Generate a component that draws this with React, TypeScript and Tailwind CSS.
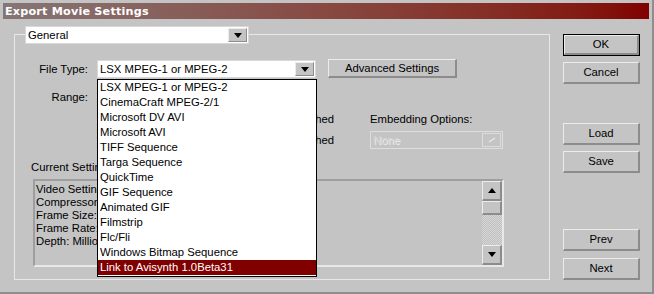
import type { ReactNode } from 'react'

const fileTypes = [
  'LSX MPEG-1 or MPEG-2',
  'CinemaCraft MPEG-2/1',
  'Microsoft DV AVI',
  'Microsoft AVI',
  'TIFF Sequence',
  'Targa Sequence',
  'QuickTime',
  'GIF Sequence',
  'Animated GIF',
  'Filmstrip',
  'Flc/Fli',
  'Windows Bitmap Sequence',
  'Link to Avisynth 1.0Beta31',
]

function Arrow({ up = false, color = '#000' }: { up?: boolean; color?: string }) {
  return (
    <svg width="8" height="5" viewBox="0 0 8 5">
      <polygon points={up ? '0,5 8,5 4,0' : '0,0 8,0 4,5'} fill={color} />
    </svg>
  )
}

function Button({ children, isDefault = false, className = '' }: { children: ReactNode; isDefault?: boolean; className?: string }) {
  const face = (
    <div className="flex-1 flex items-center justify-center border border-t-[#ececec] border-l-[#ececec] border-r-[#8c8c8c] border-b-[#8c8c8c] border-b-2 border-r-2">
      {children}
    </div>
  )
  if (isDefault) {
    return <div className={`flex border border-black ${className}`}>{face}</div>
  }
  return <div className={`flex ${className}`}>{face}</div>
}

function Dropdown({ value, className = '' }: { value: string; className?: string }) {
  return (
    <div className={`flex bg-white border border-[#d8d8d8] ${className}`}>
      <div className="flex-1 pl-[2px] leading-[16px] whitespace-nowrap overflow-hidden">{value}</div>
      <div className="w-[19px] my-[1px] mr-[1px] bg-[#c4c4c4] flex items-center justify-center border border-t-[#ececec] border-l-[#ececec] border-r-[#8c8c8c] border-b-[#8c8c8c]">
        <Arrow />
      </div>
    </div>
  )
}

// text whose left part lies under the open list: only the right end shows
function TailText({ children }: { children: ReactNode }) {
  return (
    <div className="w-[17px] h-[15px] overflow-hidden flex justify-end">
      <span className="shrink-0 whitespace-nowrap">{children}</span>
    </div>
  )
}

export default function App() {
  return (
    <div className="relative w-[654px] h-[294px] overflow-hidden bg-[#c4c4c4] border-r-2 border-b-2 border-[#8e8e8e] text-[11.3px] leading-[15px] text-black font-['Liberation_Sans',Arial,sans-serif]">
      {/* title bar */}
      <div className="mx-[3px] mt-[3px] h-[16px] bg-linear-to-r from-[#857676] to-[#800000] flex items-center pl-[2px]">
        <span className="text-white font-bold text-[11.2px] tracking-[0.2px] font-['DejaVu_Sans',Verdana,sans-serif]">
          Export Movie Settings
        </span>
      </div>

      <div className="flex pt-[15px]">
        {/* left: General group */}
        <div className="pl-[14px]">
          <div className="w-[536px] h-[246px] border border-[#e8e8e8] flex flex-col">
            <Dropdown value="General" className="ml-[10px] -mt-[9px] w-[224px] h-[18px]" />

            <div className="mt-[16px] flex items-start h-[18px]">
              <div className="w-[73px] text-right leading-[18px]">File Type:</div>
              <Dropdown value="LSX MPEG-1 or MPEG-2" className="ml-[9px] w-[219px] h-[18px]" />
              <Button className="ml-[12px] -mt-[1px] w-[129px] h-[19px]">Advanced Settings</Button>
            </div>

            <div className="mt-[12px] flex h-[15px]">
              <div className="w-[73px] text-right">Range:</div>
            </div>

            <div className="mt-[7px] flex">
              <div className="ml-[302px] flex flex-col">
                <TailText>Open When Finished</TailText>
                <div className="mt-[6px]">
                  <TailText>Beep When Finished</TailText>
                </div>
              </div>
              <div className="ml-[36px] flex flex-col">
                <div className="h-[15px]">Embedding Options:</div>
                <div className="mt-[4px] w-[133px] h-[18px] flex border border-[#dedede]">
                  <div className="flex-1 pl-[2px] leading-[16px] text-[#d2d2d2] [text-shadow:1px_1px_0_#ececec]">None</div>
                  <div className="w-[19px] my-[1px] mr-[1px] flex items-center justify-center border border-[#dcdcdc]">
                    <svg width="8" height="6" viewBox="0 0 8 6">
                      <path d="M1 5 L7 1" stroke="#ececec" strokeWidth="1.2" />
                    </svg>
                  </div>
                </div>
              </div>
            </div>

            <div className="mt-[11px] ml-[16px] w-[66px] h-[15px] overflow-hidden whitespace-nowrap">Current Settings:</div>

            <div className="mt-[4px] ml-[18px] w-[471px] h-[88px] flex border-2 border-t-[#9e9e9e] border-l-[#9e9e9e] border-r-[#e8e8e8] border-b-[#e8e8e8]">
              <div className="flex-1">
                <div className="w-[62px] pl-[1px] pt-[2px] leading-[13px] whitespace-nowrap overflow-hidden">
                  <div>Video Settings</div>
                  <div>Compressor: LSX MPEG</div>
                  <div>Frame Size: 720 x 480</div>
                  <div>Frame Rate: 29.97</div>
                  <div>Depth: Millions</div>
                </div>
              </div>
              <div className="w-[20px] flex flex-col">
                <div className="h-[20px] flex items-center justify-center border border-t-[#ececec] border-l-[#ececec] border-r-[#8c8c8c] border-b-[#8c8c8c] border-b-2 border-r-2">
                  <Arrow up />
                </div>
                <div className="h-[14px] border border-t-[#ececec] border-l-[#ececec] border-r-[#8c8c8c] border-b-[#8c8c8c] border-b-2 border-r-2" />
                <div className="flex-1 bg-[repeating-conic-gradient(#d6d6d6_0_25%,#c0c0c0_0_50%)] bg-[length:2px_2px]" />
                <div className="h-[20px] flex items-center justify-center border border-t-[#ececec] border-l-[#ececec] border-r-[#8c8c8c] border-b-[#8c8c8c] border-b-2 border-r-2">
                  <Arrow />
                </div>
              </div>
            </div>
          </div>
        </div>

        {/* right: buttons */}
        <div className="ml-[13px] w-[77px] flex flex-col">
          <Button isDefault className="h-[22px]">OK</Button>
          <Button className="mt-[6px] h-[22px]">Cancel</Button>
          <Button className="mt-[39px] h-[22px]">Load</Button>
          <Button className="mt-[6px] h-[22px]">Save</Button>
          <Button className="mt-[56px] h-[22px]">Prev</Button>
          <Button className="mt-[7px] h-[22px]">Next</Button>
        </div>
      </div>

      {/* open File Type list */}
      <div className="absolute left-[97px] top-[79px] w-[220px] h-[198px] border border-black bg-white">
        {fileTypes.map((t, i) => (
          <div
            key={t}
            className={`h-[15px] pl-[2px] whitespace-nowrap ${i === fileTypes.length - 1 ? 'bg-[#800000] text-white' : ''}`}
          >
            {t}
          </div>
        ))}
      </div>
    </div>
  )
}
